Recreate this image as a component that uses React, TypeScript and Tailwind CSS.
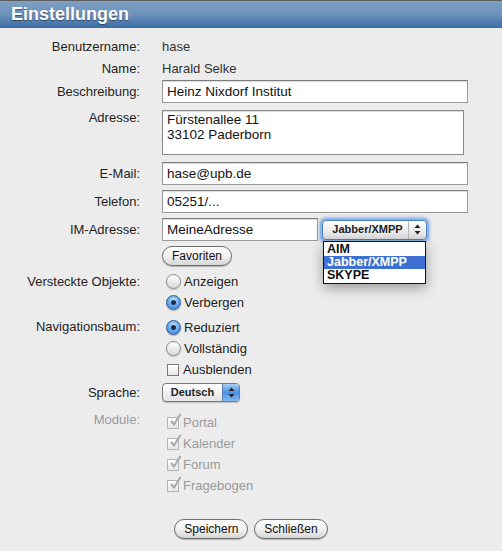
import React from "react"

const font = { fontFamily: '"Liberation Sans", Arial, sans-serif' }

const Label = ({ children, grey }: { children: React.ReactNode; grey?: boolean }) => (
  <div className={`w-[140px] shrink-0 text-right text-[13px] ${grey ? "text-[#9a9a9a]" : "text-[#1e1e1e]"}`}>{children}</div>
)

const TextInput = ({ value, w = "w-[306px]" }: { value: string; w?: string }) => (
  <div className={`${w} h-[23px] bg-white border border-[#9a9a9a] border-t-[#7d7d7d] shadow-[inset_0_1px_1px_rgba(0,0,0,0.15)] px-[4px] text-[13.5px] leading-[21px] text-[#111]`}>
    {value}
  </div>
)

const Radio = ({ checked, label }: { checked?: boolean; label: string }) => (
  <div className="h-[21px] flex items-center">
    {checked ? (
      <span className="ml-[4px] w-[15px] h-[15px] rounded-full border border-[#3a5f8f] bg-[radial-gradient(circle_at_50%_35%,#d6ecff_0%,#6aaef0_45%,#2a74d0_100%)] flex items-center justify-center shadow-[0_1px_1px_rgba(0,0,0,0.25)]">
        <span className="w-[5px] h-[5px] rounded-full bg-[#1b2c44]" />
      </span>
    ) : (
      <span className="ml-[4px] w-[15px] h-[15px] rounded-full border border-[#8a8a8a] bg-gradient-to-b from-[#ffffff] to-[#d9d9d9] shadow-[0_1px_1px_rgba(0,0,0,0.2)]" />
    )}
    <span className="ml-[3px] text-[13px] text-[#1e1e1e]">{label}</span>
  </div>
)

const Check = ({ label, checked, disabled }: { label: string; checked?: boolean; disabled?: boolean }) => (
  <div className="h-[21px] flex items-center">
    <span className={`relative ml-[5px] w-[12px] h-[12px] border ${disabled ? "border-[#b4b4b4]" : "border-[#7a7a7a]"} bg-gradient-to-b from-[#ffffff] to-[#e6e6e6]`}>
      {checked && (
        <svg className="absolute -top-[5px] left-[1px]" width="13" height="14" viewBox="0 0 13 14">
          <path d="M2 8 L5 11.5 L11.5 1" fill="none" stroke={disabled ? "#a8a8a8" : "#222"} strokeWidth="2" />
        </svg>
      )}
    </span>
    <span className={`ml-[4px] text-[13px] ${disabled ? "text-[#9a9a9a]" : "text-[#1e1e1e]"}`}>{label}</span>
  </div>
)

const Pill = ({ children }: { children: React.ReactNode }) => (
  <button className="h-[20px] px-[9px] rounded-full border border-[#6e6e6e] bg-gradient-to-b from-[#ffffff] via-[#f2f2f2] to-[#d6d6d6] shadow-[0_1px_1px_rgba(0,0,0,0.25)] text-[12px] leading-[17px] text-[#111]">
    {children}
  </button>
)

const Arrows = () => (
  <svg width="7" height="11" viewBox="0 0 7 11">
    <path d="M3.5 0.5 L6.5 4 L0.5 4 Z" fill="#222" />
    <path d="M3.5 10.5 L6.5 7 L0.5 7 Z" fill="#222" />
  </svg>
)

export default function App() {
  return (
    <div className="w-[502px] h-[551px] bg-[#ececec] overflow-hidden" style={font}>
      <div className="h-[28px] border-t border-[#5e5e5e] bg-gradient-to-b from-[#7fa0c4] via-[#6d91ba] to-[#3a6ca3] pl-[11px] text-[18px] font-bold leading-[27px] text-white [text-shadow:0_1px_1px_rgba(0,0,0,0.45)]">
        Einstellungen
      </div>

      <div className="flex flex-col">
        <div className="mt-[7px] flex h-[23px] items-center">
          <Label>Benutzername:</Label>
          <div className="ml-[22px] text-[13px] text-[#333]">hase</div>
        </div>
        <div className="flex h-[22px] items-center">
          <Label>Name:</Label>
          <div className="ml-[22px] text-[13px] text-[#333]">Harald Selke</div>
        </div>
        <div className="flex h-[23px] items-center">
          <Label>Beschreibung:</Label>
          <div className="ml-[22px] flex"><TextInput value="Heinz Nixdorf Institut" /></div>
        </div>
        <div className="mt-[7px] flex items-start">
          <div className="leading-[16px]"><Label>Adresse:</Label></div>
          <div className="ml-[22px] w-[302px] h-[45px] bg-white border border-[#8a8a8a] px-[4px] pt-[1px] text-[13.5px] leading-[15px] text-[#111] shadow-[inset_0_1px_1px_rgba(0,0,0,0.15)]">
            Fürstenallee 11<br />33102 Paderborn
          </div>
        </div>
        <div className="mt-[7px] flex h-[23px] items-center">
          <Label>E-Mail:</Label>
          <div className="ml-[22px] flex"><TextInput value="hase@upb.de" /></div>
        </div>
        <div className="mt-[5px] flex h-[23px] items-center">
          <Label>Telefon:</Label>
          <div className="ml-[22px] flex"><TextInput value="05251/..." /></div>
        </div>
        <div className="mt-[5px] flex h-[23px] items-center">
          <Label>IM-Adresse:</Label>
          <div className="ml-[22px] flex items-center">
            <TextInput value="MeineAdresse" w="w-[156px]" />
            <div className="relative ml-[4px] flex">
              <div className="w-[105px] h-[20px] rounded-[4px] border border-[#4a7fc4] shadow-[0_0_0_2px_#8fb6e8,0_0_3px_3px_rgba(90,140,210,0.5)] bg-gradient-to-b from-[#ffffff] to-[#dedede] flex items-center">
                <span className="flex-1 text-center text-[11px] font-bold text-[#222] pl-[4px]">Jabber/XMPP</span>
                <span className="w-[18px] h-full flex items-center justify-center border-l border-[#b8b8b8]"><Arrows /></span>
              </div>
              <div className="absolute left-[1px] top-[21px] w-[103px] bg-white border border-[#111] shadow-[0_4px_12px_rgba(0,0,0,0.35)] py-[1px] text-[12.5px] font-bold leading-[13px] text-[#111]">
                <div className="px-[3px]">AIM</div>
                <div className="px-[3px] bg-[#3d70d2] text-white">Jabber/XMPP</div>
                <div className="px-[3px]">SKYPE</div>
              </div>
            </div>
          </div>
        </div>
        <div className="mt-[5px] flex">
          <div className="w-[140px]" />
          <div className="ml-[22px] flex"><Pill>Favoriten</Pill></div>
        </div>
        <div className="mt-[5px] flex items-start">
          <div className="h-[21px] flex items-center"><Label>Versteckte Objekte:</Label></div>
          <div className="ml-[22px] flex flex-col">
            <Radio label="Anzeigen" />
            <Radio label="Verbergen" checked />
          </div>
        </div>
        <div className="mt-[4px] flex items-start">
          <div className="h-[19px] flex items-center"><Label>Navigationsbaum:</Label></div>
          <div className="ml-[22px] flex flex-col">
            <Radio label="Reduziert" checked />
            <Radio label="Vollständig" />
            <Check label="Ausblenden" />
          </div>
        </div>
        <div className="mt-[3px] flex h-[19px] items-center">
          <Label>Sprache:</Label>
          <div className="ml-[22px] w-[78px] h-[19px] rounded-[4px] border border-[#7a7a7a] bg-gradient-to-b from-[#ffffff] to-[#e2e2e2] flex items-center overflow-hidden shadow-[0_1px_1px_rgba(0,0,0,0.2)]">
            <span className="flex-1 text-center text-[11px] font-bold text-[#222]">Deutsch</span>
            <span className="w-[17px] h-full flex items-center justify-center bg-gradient-to-b from-[#a9cff5] via-[#4a90e2] to-[#7fb7f0] border-l border-[#5a7fb0]"><Arrows /></span>
          </div>
        </div>
        <div className="mt-[10px] flex items-start">
          <div className="leading-[16px]"><Label grey>Module:</Label></div>
          <div className="ml-[22px] flex flex-col">
            <Check label="Portal" checked disabled />
            <Check label="Kalender" checked disabled />
            <Check label="Forum" checked disabled />
            <Check label="Fragebogen" checked disabled />
          </div>
        </div>
        <div className="mt-[23px] flex justify-center gap-[6px]">
          <Pill>Speichern</Pill>
          <Pill>Schließen</Pill>
        </div>
      </div>
    </div>
  )
}
